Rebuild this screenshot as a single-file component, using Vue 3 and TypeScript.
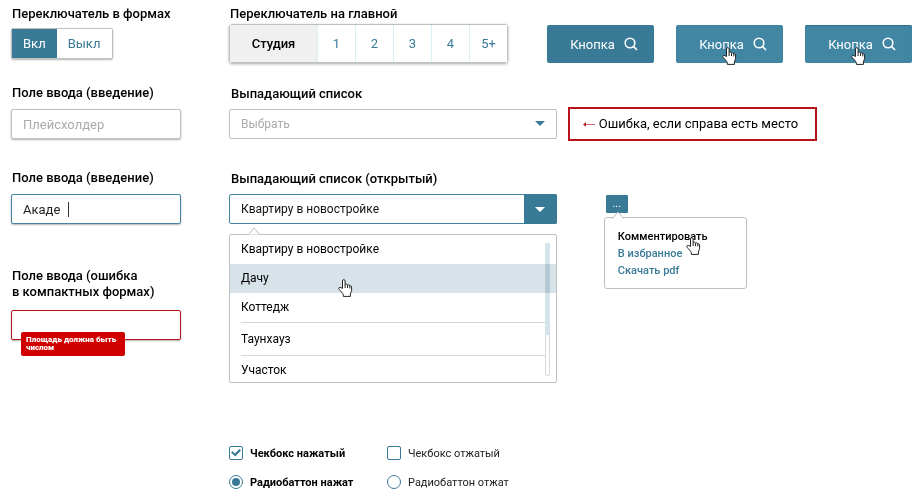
<script setup lang="ts">
import { ref } from 'vue'

const mode = ref('on')
const modes = [
  { value: 'on', label: 'Вкл' },
  { value: 'off', label: 'Выкл' },
]

const rooms = ref('Студия')
const roomOptions = ['Студия', '1', '2', '3', '4', '5+']

const buttons = [
  { state: 'normal', pointer: false },
  { state: 'hover', pointer: true },
  { state: 'pressed', pointer: true },
]

const typed = ref('Акаде')
const area = ref('')
const kind = ref('')
const property = ref('Квартиру в новостройке')
const properties = ['Квартиру в новостройке', 'Дачу', 'Коттедж', 'Таунхауз', 'Участок']
const hovered = 'Дачу'

const checkOn = ref(true)
const checkOff = ref(false)
const radio = ref('on')

const handOutline =
  'M4.5 9.5V1.9C4.5 0.2 7.1 0.2 7.1 1.9V5.6C7.5 4.7 9.4 4.9 9.5 6.2C10 5.4 11.7 5.7 11.8 7C12.4 6.4 13.6 6.8 13.6 8V11.4C13.6 13 12.4 13.6 12.4 15V17.4H5.3V15.6C4.6 14 2.6 12 1 10.2C0.1 9 1.7 7.8 2.8 8.6Z'
const handFingers = 'M7.1 5.6V9M9.5 6.2V9M11.8 7V9.4'
</script>

<template>
  <main class="page">
    <div class="side">
      <section class="block block-switch">
        <h2 class="title">Переключатель в формах</h2>
        <div class="switch" role="group" aria-label="Переключатель в формах">
          <button
            v-for="m in modes"
            :key="m.value"
            type="button"
            class="switch-item"
            :class="{ active: mode === m.value }"
            :aria-pressed="mode === m.value"
            @click="mode = m.value"
          >{{ m.label }}</button>
        </div>
      </section>

      <section class="block block-field">
        <label class="title" for="placeholder-field">Поле ввода (введение)</label>
        <input id="placeholder-field" class="field" type="text" placeholder="Плейсхолдер" />
      </section>

      <section class="block block-typing">
        <label class="title" for="typing-field">Поле ввода (введение)</label>
        <div class="field-wrap">
          <input id="typing-field" v-model="typed" class="field focused" type="text" />
          <span class="caret"></span>
        </div>
      </section>

      <section class="block">
        <label class="title" for="error-field">Поле ввода (ошибка<br />в компактных формах)</label>
        <div class="field-wrap error-wrap">
          <input id="error-field" v-model="area" class="field invalid" type="text" aria-describedby="area-error" />
          <p id="area-error" class="error-tip">Площадь должна быть числом</p>
        </div>
      </section>
    </div>

    <div class="content">
      <section class="row row-top">
        <div>
          <h2 class="title">Переключатель на главной</h2>
          <div class="rooms" role="group" aria-label="Переключатель на главной">
            <button
              v-for="r in roomOptions"
              :key="r"
              type="button"
              class="room"
              :class="{ active: rooms === r }"
              :aria-pressed="rooms === r"
              @click="rooms = r"
            >{{ r }}</button>
          </div>
        </div>
        <div class="buttons">
          <button v-for="b in buttons" :key="b.state" type="button" class="button" :class="b.state">
            Кнопка
            <svg class="loupe" viewBox="0 0 14 14" aria-hidden="true">
              <circle cx="6" cy="6" r="4.8" />
              <path d="M9.4 9.4L13 13" />
            </svg>
            <svg v-if="b.pointer" class="hand" viewBox="0 0 15 18" aria-hidden="true">
              <path class="hand-shape" :d="handOutline" />
              <path :d="handFingers" />
            </svg>
          </button>
        </div>
      </section>

      <section class="row row-select">
        <div>
          <label class="title" for="select-closed">Выпадающий список</label>
          <div class="select-wrap">
            <select id="select-closed" v-model="kind" class="select empty">
              <option value="">Выбрать</option>
              <option v-for="p in properties" :key="p" :value="p">{{ p }}</option>
            </select>
            <svg class="arrow" viewBox="0 0 10 5" aria-hidden="true"><path d="M0 0H10L5 5Z" /></svg>
          </div>
        </div>
        <p class="error-box">
          <svg class="error-arrow" viewBox="0 0 12 7" aria-hidden="true">
            <path class="error-arrow-line" d="M1 3.5H12" />
            <path class="error-arrow-head" d="M0 3.5L3 1.3V5.7Z" />
          </svg>
          Ошибка, если справа есть место
        </p>
      </section>

      <section class="row row-open">
        <div>
          <label class="title" for="select-open">Выпадающий список (открытый)</label>
          <div class="select-wrap">
            <select id="select-open" v-model="property" class="select opened">
              <option v-for="p in properties" :key="p" :value="p">{{ p }}</option>
            </select>
            <span class="opener">
              <svg class="opener-arrow" viewBox="0 0 10 5" aria-hidden="true"><path d="M0 0H10L5 5Z" /></svg>
            </span>
          </div>
          <div class="list-panel">
            <svg class="beak" viewBox="0 0 12 8" aria-hidden="true"><path d="M0.5 7.5L6 1L11.5 7.5" /></svg>
            <ul class="list" role="listbox" aria-label="Выпадающий список (открытый)">
              <li
                v-for="p in properties"
                :key="p"
                class="option"
                role="option"
                :aria-selected="property === p"
                :class="{ hovered: p === hovered }"
                @click="property = p"
              >
                <span class="option-text">{{ p }}</span>
                <svg v-if="p === hovered" class="hand" viewBox="0 0 15 18" aria-hidden="true">
                  <path class="hand-shape" :d="handOutline" />
                  <path :d="handFingers" />
                </svg>
              </li>
            </ul>
            <div class="track"><div class="thumb"></div></div>
          </div>
        </div>

        <div class="menu">
          <button type="button" class="menu-button" aria-label="Меню" aria-expanded="true">...</button>
          <nav class="menu-panel">
            <svg class="beak" viewBox="0 0 12 8" aria-hidden="true"><path d="M0.5 7.5L6 1L11.5 7.5" /></svg>
            <a href="#comment" class="menu-link current">Комментировать
              <svg class="hand" viewBox="0 0 15 18" aria-hidden="true">
                <path class="hand-shape" :d="handOutline" />
                <path :d="handFingers" />
              </svg>
            </a>
            <a href="#favorite" class="menu-link">В избранное</a>
            <a href="#pdf" class="menu-link">Скачать pdf</a>
          </nav>
        </div>
      </section>

      <section class="choices">
        <label class="choice" :class="{ chosen: checkOn }"><input v-model="checkOn" type="checkbox" class="box" />Чекбокс нажатый</label>
        <label class="choice" :class="{ chosen: checkOff }"><input v-model="checkOff" type="checkbox" class="box" />Чекбокс отжатый</label>
        <label class="choice" :class="{ chosen: radio === 'on' }"><input v-model="radio" type="radio" name="radio" value="on" class="dot" />Радиобаттон нажат</label>
        <label class="choice" :class="{ chosen: radio === 'off' }"><input v-model="radio" type="radio" name="radio" value="off" class="dot" />Радиобаттон отжат</label>
      </section>
    </div>
  </main>
</template>

<style>
body {
  background: #fff;
}
</style>

<style scoped>
.page {
  --accent: #397a96;
  --line: #bfbfbf;
  display: grid;
  grid-template-columns: 170px minmax(0, 1fr);
  column-gap: 48px;
  padding: 6px 8px 0 11px;
  font-family: Roboto, 'Liberation Sans', sans-serif;
  font-size: 12px;
  color: #000;
}

.page *,
.page *::before,
.page *::after {
  box-sizing: border-box;
}

button,
input,
select {
  font: inherit;
  margin: 0;
}

button {
  cursor: pointer;
}

h2,
p,
ul {
  margin: 0;
  padding: 0;
}

.title {
  display: block;
  font-size: 13px;
  font-weight: 500;
  line-height: 16px;
  padding-left: 1px;
  white-space: nowrap;
}

/* left column */
.block-switch {
  height: 79px;
}

.block-field {
  height: 85px;
}

.block-typing {
  height: 98px;
}

.switch {
  display: inline-flex;
  margin-top: 6px;
  border: 1px solid var(--line);
  border-radius: 2px;
  box-shadow: 0 1px 2px rgba(0, 0, 0, 0.3);
}

.switch-item {
  height: 29px;
  padding: 0 12px 0 11px;
  border: 0;
  background: #fff;
  color: var(--accent);
  font-size: 13px;
}

.switch-item.active {
  background: var(--accent);
  color: #fff;
  padding: 0 11px;
}

.field {
  display: block;
  width: 100%;
  height: 30px;
  margin-top: 8px;
  padding: 0 11px;
  border: 1px solid var(--line);
  border-radius: 2px;
  background: #fff;
  box-shadow: 0 1px 2px rgba(0, 0, 0, 0.3);
  font-size: 13px;
  color: #222;
  outline: 0;
}

.field::placeholder {
  color: #aaa;
  opacity: 1;
}

.field.focused {
  border-color: #4186a3;
}

.field.invalid {
  border-color: #b5121b;
}

.field-wrap {
  position: relative;
}

.error-wrap .field {
  margin-top: 10px;
}

.caret {
  position: absolute;
  left: 57px;
  top: 8px;
  width: 1px;
  height: 15px;
  background: #333;
}

.error-tip {
  position: absolute;
  left: 10px;
  top: 22px;
  width: 104px;
  padding: 4px 5px;
  border-radius: 2px;
  background: #d00000;
  color: #fff;
  font-size: 8px;
  font-weight: 900;
  line-height: 8px;
}

/* right column */
.row {
  display: grid;
  grid-template-columns: minmax(0, 48fr) minmax(0, 52fr);
}

.row-top {
  display: flex;
  justify-content: space-between;
  align-items: flex-start;
  height: 80px;
}

.rooms {
  display: inline-flex;
  margin-top: 2px;
  border: 1px solid var(--line);
  border-radius: 3px;
  box-shadow: 0 1px 3px rgba(0, 0, 0, 0.35);
}

.room {
  height: 37px;
  width: 38px;
  padding: 0;
  border: 0;
  border-left: 1px solid #d9eef5;
  background: #fff;
  color: var(--accent);
  font-size: 13px;
}

.room.active {
  width: 87px;
  border-left: 0;
  background: #f0f0f0;
  color: #000;
  font-weight: 500;
}

.buttons {
  display: flex;
  gap: 22px;
  margin-top: 19px;
}

.button {
  position: relative;
  display: flex;
  align-items: center;
  justify-content: center;
  gap: 9px;
  width: 107px;
  height: 38px;
  padding: 0 0 0 7px;
  border: 0;
  border-radius: 2px;
  background: var(--accent);
  color: #fff;
  font-size: 13px;
}

.button.hover,
.button.pressed {
  background: #4186a3;
}

.button.pressed {
  box-shadow: inset 0 1px 1px #316f89;
}

.loupe {
  width: 14px;
  height: 14px;
  fill: none;
  stroke: currentColor;
  stroke-width: 1.6;
}

.hand {
  position: absolute;
  width: 15px;
  height: 18px;
  fill: none;
  stroke: #222;
  stroke-width: 1;
}

.hand-shape {
  fill: #fff;
}

.button .hand {
  left: 46px;
  top: 22px;
}

.row-select {
  align-items: start;
  height: 85px;
}

.select-wrap {
  position: relative;
  margin-top: 7px;
}

.select {
  appearance: none;
  display: block;
  width: 100%;
  height: 30px;
  padding: 0 44px 0 11px;
  border: 1px solid var(--line);
  border-radius: 2px;
  background: #fff;
  color: #111;
  font-size: 12px;
  outline: 0;
}

.select.empty {
  color: #aaa;
}

.select.opened {
  border-color: #4186a3;
}

.row-select .title,
.row-open .title {
  padding-left: 2px;
}

.arrow {
  position: absolute;
  right: 12px;
  top: 12px;
  width: 10px;
  height: 5px;
  fill: var(--accent);
}

.opener {
  position: absolute;
  right: 0;
  top: 0;
  bottom: 0;
  width: 33px;
  display: flex;
  align-items: center;
  justify-content: center;
  border-radius: 0 2px 2px 0;
  background: var(--accent);
  pointer-events: none;
}

.opener-arrow {
  width: 10px;
  height: 5px;
  fill: #fff;
}

.error-box {
  display: flex;
  align-items: center;
  gap: 4px;
  justify-self: start;
  margin: 21px 0 0 11px;
  padding: 0 17px 0 13px;
  border: 2px solid #b5121b;
  font-size: 13px;
  line-height: 30px;
  white-space: nowrap;
}

.error-arrow {
  width: 12px;
  height: 7px;
}

.error-arrow-line {
  stroke: #cf6a70;
}

.error-arrow-head {
  fill: #b5121b;
}

.row-open {
  height: 274px;
}

.list-panel {
  position: relative;
  margin-top: 10px;
  border: 1px solid var(--line);
  border-radius: 2px;
  background: #fff;
}

.list {
  list-style: none;
  height: 147px;
  overflow: hidden;
}

.option {
  position: relative;
  padding: 0 11px;
  line-height: 29px;
  cursor: pointer;
}

.option-text {
  display: block;
}

.option.hovered {
  background: #d7e3e9;
}

.option:nth-child(n + 4) .option-text {
  border-top: 1px solid #d6d6d6;
}

.option:nth-child(4) .option-text {
  line-height: 32px;
}

.option .hand {
  left: 108px;
  top: 15px;
}

.beak {
  position: absolute;
  left: 18px;
  top: -8px;
  width: 12px;
  height: 8px;
  fill: #fff;
  stroke: var(--line);
}

.track {
  position: absolute;
  right: 6px;
  top: 8px;
  bottom: 6px;
  width: 5px;
  border: 1px solid #d9d9d9;
  border-radius: 2px;
  background: #fff;
  mix-blend-mode: multiply;
}

.thumb {
  height: 70%;
  margin: -1px;
  background: #d5e3ea;
}

.menu {
  justify-self: start;
  margin: 24px 0 0 47px;
}

.menu-button {
  display: block;
  width: 22px;
  height: 18px;
  margin-left: 2px;
  padding: 0;
  border: 0;
  border-radius: 1px;
  background: var(--accent);
  color: #fff;
  font-size: 11px;
  line-height: 16px;
}

.menu-panel {
  position: relative;
  width: 143px;
  margin-top: 4px;
  padding: 10px 13px 9px;
  border: 1px solid var(--line);
  border-radius: 3px;
}

.menu-panel .beak {
  left: 7px;
  top: -7px;
}

.menu-link {
  position: relative;
  display: block;
  width: max-content;
  color: var(--accent);
  font-size: 11px;
  font-weight: 500;
  line-height: 17px;
  text-decoration: none;
}

.menu-link.current {
  color: #000;
}

.menu-link .hand {
  left: 68px;
  top: 9px;
}

.choices {
  display: grid;
  grid-template-columns: 158px max-content;
  row-gap: 13px;
}

.choice {
  display: flex;
  align-items: center;
  gap: 7px;
  height: 16px;
  font-size: 11px;
  color: #222;
}

.choice.chosen {
  color: #000;
  font-weight: 700;
}

.box,
.dot {
  appearance: none;
  display: grid;
  place-items: center;
  flex: none;
  width: 14px;
  height: 14px;
  border: 1px solid var(--accent);
  border-radius: 2px;
  background: #fff;
}

.dot {
  border-radius: 50%;
}

.box:checked::before {
  content: '';
  width: 10px;
  height: 8px;
  background: var(--accent);
  clip-path: polygon(0 44%, 16% 28%, 40% 56%, 84% 0, 100% 18%, 42% 94%);
}

.dot:checked::before {
  content: '';
  width: 8px;
  height: 8px;
  border-radius: 50%;
  background: var(--accent);
}
</style>
